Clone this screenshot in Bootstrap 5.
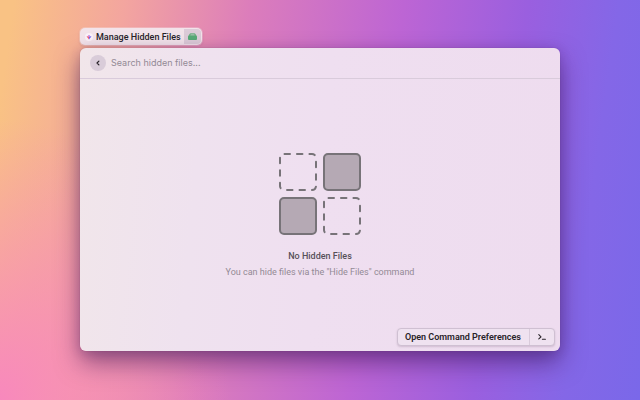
<!DOCTYPE html>
<html lang="en">
<head>
<meta charset="utf-8">
<meta name="viewport" content="width=device-width, initial-scale=1">
<title>Manage Hidden Files</title>
<link href="https://cdn.jsdelivr.net/npm/bootstrap@5.3.0/dist/css/bootstrap.min.css" rel="stylesheet">
<style>
  body {
    font-family: Roboto, "Liberation Sans", sans-serif;
    font-size: 9px;
    line-height: 12px;
    color: #282329;
    background:
      radial-gradient(ellipse 36% 70% at 0% 100%, #f888bd 0%, #f888bd00 100%),
      linear-gradient(98deg, #f9c284 2%, #f3a59f 18%, #dc7dbb 36%, #bd65d4 58%, #9a5fdf 76%, #8467e7 89%, #7a68e9 100%);
  }
  .stage { padding: 28px 0 49px; }
  .tag {
    height: 17px;
    padding-left: 5px;
    gap: 3px;
    border-radius: 5px;
    background: #f2e3ea;
    box-shadow: 0 0 0 1px #ffffff40, 0 1px 3px #50206030;
  }
  .tag-end { width: 17px; height: 15px; margin-right: 1px; border-radius: 0 4px 4px 0; background: #dccbd8; }
  .panel {
    margin-top: 3px;
    border-radius: 6px;
    background: linear-gradient(95deg, #f1e6ea 0%, #efe2ef 25%, #efdff0 50%, #eedcef 100%);
    box-shadow: 0 0 1px #60306080, 0 12px 24px #35105080, 0 2px 12px #35105030;
  }
  .search-bar { height: 31px; padding: 0 10px; gap: 5px; border-bottom: 1px solid #d9cbdb; }
  .back { width: 16px; height: 16px; background: #d9ccd9; color: #262127; }
  .search-bar .form-control { min-height: 20px; font-family: Inter, "Liberation Sans", sans-serif; font-size: 9px; line-height: 18px; color: #282329; box-shadow: none; }
  .search-bar .form-control::placeholder { color: #938a95; opacity: 1; }
  .art { width: 84px; height: 84px; }
  .title-text { margin-top: 13px; font-size: 9px; line-height: 14px; color: #565058; }
  .hint { margin-top: 2px; font-size: 9px; line-height: 14px; color: #938a95; }
  .empty { padding: 23px 12px 0; }
  .actions { padding: 0 5px 5px; }
  .actions .btn-group { border: 1px solid #cfc0d2; border-radius: 4px; background: #efe2f0; box-shadow: 0 1px 2px #50305030; }
  .actions .btn { height: 16px; font-size: 9px; line-height: 16px; color: #282329; }
  .prefs { padding: 0 9px 0 7px; }
  .actions .shell { width: 25px; border-left: 1px solid #d9cbdb; }
</style>
<script defer src="https://cdn.jsdelivr.net/npm/bootstrap@5.3.0/dist/js/bootstrap.bundle.min.js"></script>
</head>
<body>
<div class="stage w-75 mx-auto min-vh-100 d-flex flex-column">
  <div class="tag d-flex align-items-center align-self-start fw-medium">
    <svg width="8" height="8" viewBox="0 0 8 8" aria-hidden="true">
      <circle cx="4" cy="4" r="4" fill="#fbf1f8"/>
      <path d="M1.5 3.2 4 3.4 3.9 6.6Z" fill="#f05a74"/>
      <path d="M6.5 3.2 4 3.4 4.1 6.6Z" fill="#6c62f0"/>
      <circle cx="4" cy="2.8" r=".9" fill="#c77ae2"/>
    </svg>
    <span>Manage Hidden Files</span>
    <span class="tag-end d-flex align-items-center justify-content-center">
      <svg width="9" height="7" viewBox="0 0 9 7" aria-hidden="true">
        <path d="M2.5.2h4Q7 .2 7.3.8L9 3.4H0L1.700.8Q2 .2 2.500.2Z" fill="#6dae84"/>
        <path d="M2.8 1.300h3.400l.5 1.100H2.300Z" fill="#a5c5b1"/>
        <rect y="2.7" width="9" height="4.2" rx="1" fill="#56a976"/>
      </svg>
    </span>
  </div>

  <main class="panel flex-grow-1 d-flex flex-column">
    <div class="search-bar d-flex align-items-center">
      <button type="button" class="back btn rounded-circle border-0 p-0 flex-shrink-0 d-flex align-items-center justify-content-center" aria-label="Back">
        <svg width="6" height="6" viewBox="0 0 6 6" fill="none" stroke="currentColor" stroke-width="1.2" stroke-linecap="round" stroke-linejoin="round"><path d="M3.9 1.1 2 3l1.9 1.9"/></svg>
      </button>
      <input type="text" class="form-control border-0 bg-transparent p-0" placeholder="Search hidden files..." aria-label="Search hidden files">
    </div>

    <section class="empty flex-grow-1 d-flex flex-column align-items-center justify-content-center text-center">
      <svg class="art" viewBox="0 0 84 84" fill="none" stroke="#777378" stroke-width="2" aria-hidden="true">
        <g fill="#b5a9b4">
          <rect x="46" y="2" width="36" height="36" rx="4"/>
          <rect x="2" y="46" width="36" height="36" rx="4"/>
        </g>
        <g stroke-linecap="round" stroke-dasharray="5.5 6.96" stroke-dashoffset="-.5">
          <rect x="2" y="2" width="36" height="36" rx="4"/>
          <rect x="46" y="46" width="36" height="36" rx="4"/>
        </g>
      </svg>
      <h1 class="title-text mb-0 fw-medium">No Hidden Files</h1>
      <p class="hint mb-0">You can hide files via the "Hide Files" command</p>
    </section>

    <div class="actions d-flex justify-content-end">
      <div class="btn-group" role="group" aria-label="Command actions">
        <button type="button" class="prefs btn border-0 py-0 fw-semibold">Open Command Preferences</button>
        <button type="button" class="shell btn border-top-0 border-end-0 border-bottom-0 rounded-0 p-0 d-flex align-items-center justify-content-center" aria-label="Open in terminal">
          <svg width="8" height="8" viewBox="0 0 8 8" fill="none" stroke="currentColor" stroke-width="1.1" stroke-linecap="round" stroke-linejoin="round"><path d="M.8 1.7 3 3.8.8 5.9M4.4 6.2h3"/></svg>
        </button>
      </div>
    </div>
  </main>
</div>
</body>
</html>
